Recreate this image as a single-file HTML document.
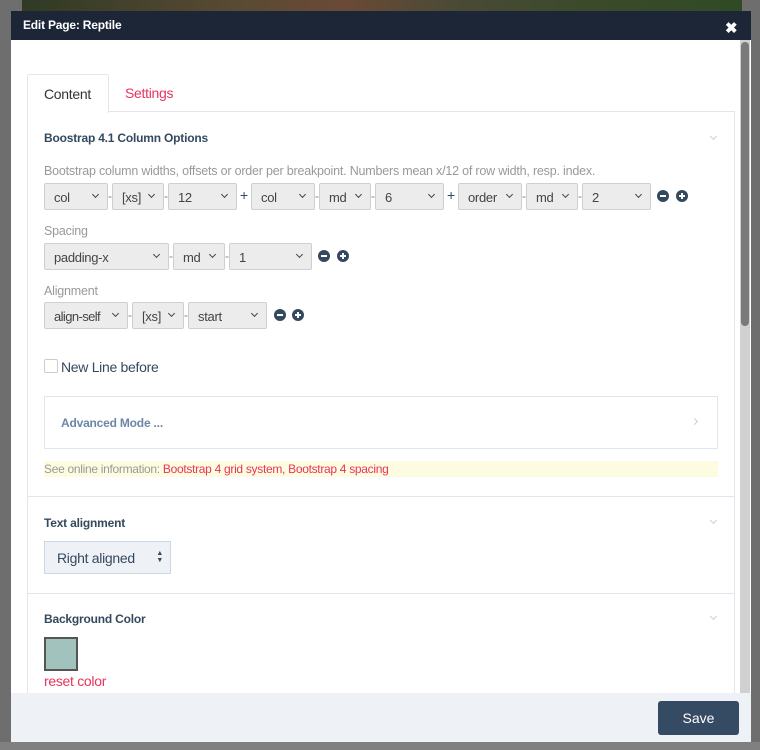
<!DOCTYPE html>
<html><head><meta charset="utf-8"><style>
*{box-sizing:border-box;margin:0;padding:0}
body{width:760px;height:750px;overflow:hidden;background:#6e6e6e;font-family:"Liberation Sans",sans-serif;position:relative}
.a{position:absolute}
.top{left:22px;top:0;width:720px;height:12px;background:linear-gradient(90deg,#2f3a24,#5a4a34 30%,#6a4a36 45%,#4a4a36 60%,#3a4a2a 80%,#304a26)}
.modal{left:11px;top:11px;width:740px;height:731px;background:#fff}
.hdr{left:11px;top:11px;width:740px;height:29px;background:#1c2636;color:#fff;font-size:12px;font-weight:bold;letter-spacing:-0.2px}
.sel{position:absolute;height:27px;background:#ececec;border:1px solid #cfcfcf;border-radius:2px;font-size:13px;letter-spacing:-0.3px;color:#444;padding:6px 0 0 9px}
.sel:after{content:"";position:absolute;right:9px;top:8px;width:4px;height:4px;border-right:1.6px solid #444;border-bottom:1.6px solid #444;transform:rotate(45deg)}
.sep{position:absolute;font-size:12px;color:#68a}
.pl{position:absolute;font-size:14px;color:#34495e}
.ic{position:absolute;width:12px;height:12px;border-radius:50%;background:#34495e}
.ic:before{content:"";position:absolute;left:3px;top:5px;width:6px;height:2px;background:#fff}
.ic.p:after{content:"";position:absolute;left:5px;top:3px;width:2px;height:6px;background:#fff}
.lbl{position:absolute;font-size:12.5px;letter-spacing:-0.2px;color:#999}
.h{position:absolute;font-size:12px;font-weight:bold;color:#34495e;letter-spacing:-0.2px}
.chev{position:absolute;width:5px;height:5px;border-right:1px solid #ccc;border-bottom:1px solid #ccc;transform:rotate(45deg)}
</style></head><body>
<div class="a top"></div>
<div class="a" style="left:0;top:742px;width:760px;height:8px;background:#808080"></div>
<div class="a modal"></div>
<div class="a hdr"><span style="position:absolute;left:12px;top:7px">Edit Page: Reptile</span><span style="position:absolute;left:714px;top:8px;font-size:15px">✖</span></div>
<div class="a" style="left:740px;top:40px;width:10px;height:653px;background:#d0d0d0"></div>
<div class="a" style="left:741px;top:42px;width:8px;height:284px;background:#7a7a7a;border-radius:4px"></div>
<div class="a" style="left:27px;top:111px;width:708px;height:590px;border:1px solid #e1e6ee;border-bottom:none"></div>
<div class="a" style="left:27px;top:74px;width:82px;height:39px;border:1px solid #e1e6ee;border-bottom:none;background:#fff;border-radius:3px 3px 0 0;font-size:14px;color:#333;padding:11px 0 0 16px;letter-spacing:-0.3px">Content</div>
<div class="a" style="left:125px;top:85px;font-size:14px;color:#e8335e;letter-spacing:-0.3px">Settings</div>
<div class="h" style="left:44px;top:131px">Boostrap 4.1 Column Options</div>
<div class="chev" style="left:711px;top:134px"></div>
<div class="lbl" style="left:44px;top:164px">Bootstrap column widths, offsets or order per breakpoint. Numbers mean x/12 of row width, resp. index.</div>
<div class="sel" style="left:44px;top:183px;width:64px">col</div>
<span class="sep" style="left:108px;top:189px">-</span>
<div class="sel" style="left:112px;top:183px;width:52px">[xs]</div>
<span class="sep" style="left:164px;top:189px">-</span>
<div class="sel" style="left:168px;top:183px;width:69px">12</div>
<span class="pl" style="left:240px;top:187px">+</span>
<div class="sel" style="left:251px;top:183px;width:64px">col</div>
<span class="sep" style="left:315px;top:189px">-</span>
<div class="sel" style="left:319px;top:183px;width:52px">md</div>
<span class="sep" style="left:371px;top:189px">-</span>
<div class="sel" style="left:375px;top:183px;width:69px">6</div>
<span class="pl" style="left:447px;top:187px">+</span>
<div class="sel" style="left:458px;top:183px;width:64px">order</div>
<span class="sep" style="left:522px;top:189px">-</span>
<div class="sel" style="left:526px;top:183px;width:52px">md</div>
<span class="sep" style="left:578px;top:189px">-</span>
<div class="sel" style="left:582px;top:183px;width:69px">2</div>
<div class="ic" style="left:657px;top:190px"></div><div class="ic p" style="left:676px;top:190px"></div>
<div class="lbl" style="left:44px;top:224px">Spacing</div>
<div class="sel" style="left:44px;top:243px;width:125px">padding-x</div>
<span class="sep" style="left:169px;top:249px">-</span>
<div class="sel" style="left:173px;top:243px;width:52px">md</div>
<span class="sep" style="left:225px;top:249px">-</span>
<div class="sel" style="left:229px;top:243px;width:83px">1</div>
<div class="ic" style="left:318px;top:250px"></div><div class="ic p" style="left:337px;top:250px"></div>
<div class="lbl" style="left:44px;top:284px">Alignment</div>
<div class="sel" style="left:44px;top:302px;width:84px;letter-spacing:-0.6px">align-self</div>
<span class="sep" style="left:128px;top:308px">-</span>
<div class="sel" style="left:132px;top:302px;width:52px">[xs]</div>
<span class="sep" style="left:184px;top:308px">-</span>
<div class="sel" style="left:188px;top:302px;width:79px">start</div>
<div class="ic" style="left:274px;top:309px"></div><div class="ic p" style="left:292px;top:309px"></div>
<div class="a" style="left:44px;top:359px;width:14px;height:14px;border:1px solid #ccc;border-radius:2px"></div>
<div class="a" style="left:61px;top:359px;font-size:14px;color:#34495e;letter-spacing:-0.3px">New Line before</div>
<div class="a" style="left:44px;top:396px;width:674px;height:53px;border:1px solid #e1e6ee"></div>
<div class="a" style="left:61px;top:416px;font-size:12px;font-weight:bold;color:#6a86a8;letter-spacing:-0.2px">Advanced Mode ...</div>
<div class="a" style="left:692px;top:419px;width:5px;height:5px;border-right:1px solid #ccc;border-top:1px solid #ccc;transform:rotate(45deg)"></div>
<div class="a" style="left:44px;top:461px;width:674px;height:16px;background:#fefce0;font-size:12px;color:#999;padding:1px 0 0 0;letter-spacing:-0.3px">See online information: <span style="color:#e8335e">Bootstrap 4 grid system, Bootstrap 4 spacing</span></div>
<div class="a" style="left:28px;top:496px;width:706px;height:1px;background:#e1e6ee"></div>
<div class="h" style="left:44px;top:516px">Text alignment</div>
<div class="chev" style="left:711px;top:518px"></div>
<div class="a" style="left:44px;top:541px;width:127px;height:33px;background:#eef1f6;border:1px solid #cdd8e6;font-size:14px;color:#34495e;padding:8px 0 0 12px;letter-spacing:-0.3px">Right aligned<span style="position:absolute;right:7px;top:8px;font-size:7px;line-height:7px">▲<br>▼</span></div>
<div class="a" style="left:28px;top:593px;width:706px;height:1px;background:#e1e6ee"></div>
<div class="h" style="left:44px;top:612px">Background Color</div>
<div class="chev" style="left:711px;top:614px"></div>
<div class="a" style="left:44px;top:637px;width:34px;height:34px;background:#a1c2bd;border:2px solid #555"></div>
<div class="a" style="left:44px;top:673px;font-size:14px;color:#e8335e;letter-spacing:-0.3px">reset color</div>
<div class="a" style="left:11px;top:693px;width:740px;height:49px;background:#eef1f5"></div>
<div class="a" style="left:658px;top:701px;width:81px;height:34px;background:#354a63;border-radius:3px;color:#fff;font-size:14px;text-align:center;padding-top:9px">Save</div>
</body></html>
